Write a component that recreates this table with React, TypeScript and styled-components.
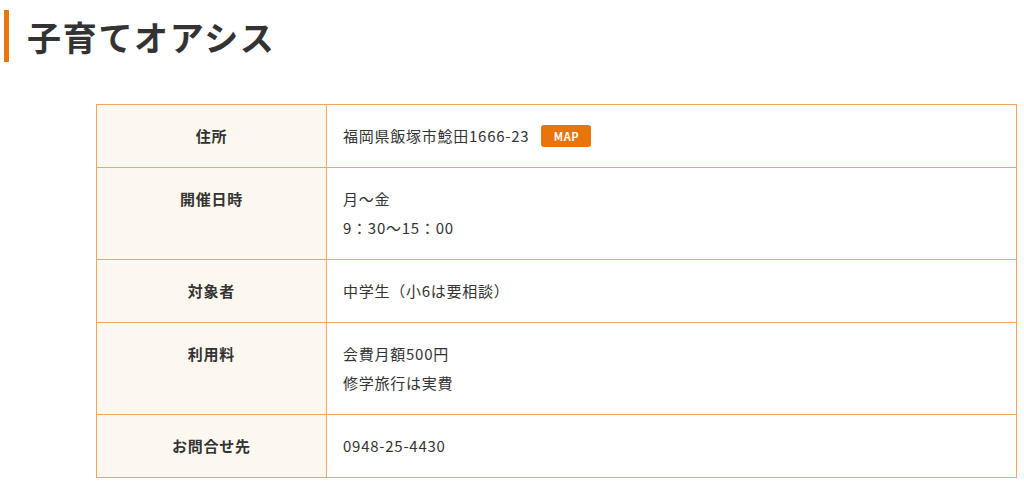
import styled, { createGlobalStyle } from "styled-components";

type Row = {
  label: string;
  lines: string[];
  map?: boolean;
};

const rows: Row[] = [
  { label: "住所", lines: ["福岡県飯塚市鯰田1666-23"], map: true },
  { label: "開催日時", lines: ["月～金", "9：30～15：00"] },
  { label: "対象者", lines: ["中学生（小6は要相談）"] },
  { label: "利用料", lines: ["会費月額500円", "修学旅行は実費"] },
  { label: "お問合せ先", lines: ["0948-25-4430"] },
];

const App: React.FC = () => {
  return (
    <Page>
      <GlobalStyle />
      <Heading>子育てオアシス</Heading>
      <InfoTable>
        <tbody>
          {rows.map((row) => (
            <tr key={row.label}>
              <Label>{row.label}</Label>
              <Value>
                {row.lines.map((line, i) => (
                  <Line key={i} first={i === 0}>
                    {line}
                    {row.map && <MapButton href="#">MAP</MapButton>}
                  </Line>
                ))}
              </Value>
            </tr>
          ))}
        </tbody>
      </InfoTable>
    </Page>
  );
};

const GlobalStyle = createGlobalStyle`
  body {
    margin: 0;
    background: #fff;
    font-family: "Noto Sans CJK JP", "Noto Sans", sans-serif;
    color: #333;
  }
`;

const Page = styled.div`
  width: 1024px;
  padding-top: 10px;
`;

const Heading = styled.h1`
  margin: 0 0 42px 4px;
  padding-left: 18px;
  height: 52px;
  display: flex;
  align-items: center;
  border-left: 5px solid #e8780c;
  font-size: 34px;
  font-weight: 700;
  letter-spacing: 0.05em;
  color: #333;
`;

const InfoTable = styled.table`
  margin-left: 96px;
  width: 921px;
  border-collapse: collapse;
  font-size: 15px;
  line-height: 22px;
  letter-spacing: 0.05em;
`;

const Label = styled.th`
  box-sizing: border-box;
  width: 230px;
  padding: 20px 16px;
  background: #fdf8ef;
  border: 1px solid #f3a55c;
  text-align: center;
  vertical-align: top;
  font-weight: 700;
  color: #333;
`;

const Value = styled.td`
  padding: 20px 16px;
  border: 1px solid #f3a55c;
  vertical-align: top;
  color: #333;
`;

const Line = styled.div<{ first: boolean }>`
  display: flex;
  align-items: center;
  margin-top: ${(props) => (props.first ? "0" : "7px")};
`;

const MapButton = styled.a`
  display: inline-flex;
  align-items: center;
  justify-content: center;
  margin-left: 12px;
  width: 50px;
  height: 22px;
  border-radius: 3px;
  background: #e8740a;
  color: #fff;
  font-size: 11px;
  font-weight: 700;
  letter-spacing: 0.04em;
  text-decoration: none;
`;

export default App;
